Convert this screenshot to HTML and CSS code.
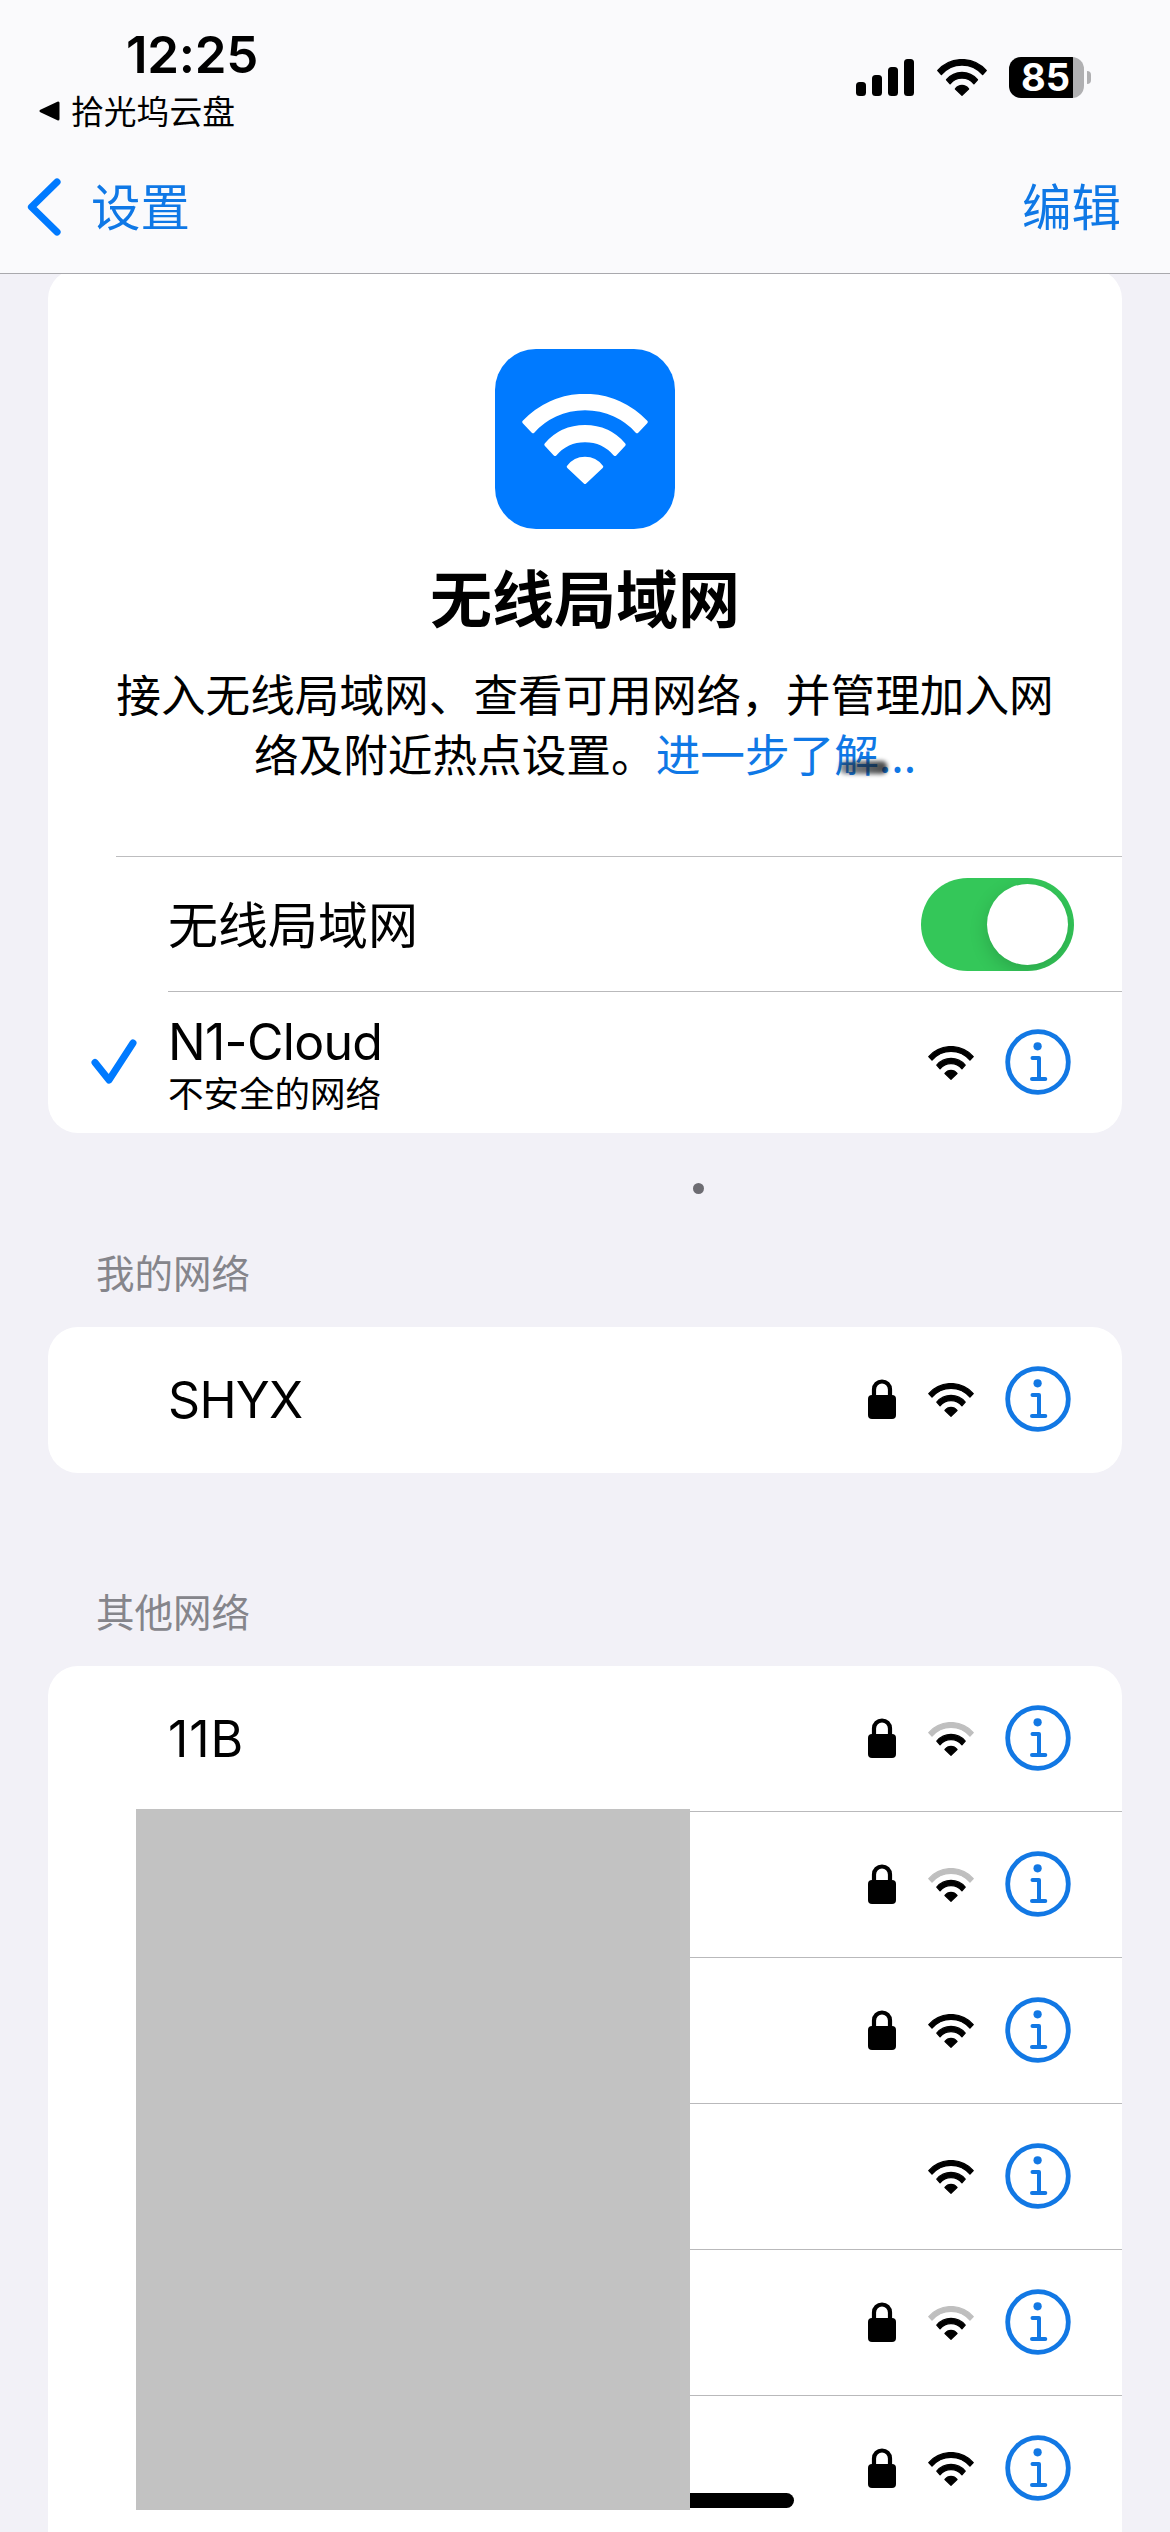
FILE: index.html
```html
<!DOCTYPE html>
<html lang="zh-CN">
<head>
<meta charset="utf-8">
<title>无线局域网</title>
<link rel="stylesheet" href="styles.css">
</head>
<body>
<svg class="sprite" aria-hidden="true">
  <symbol id="wifi" viewBox="0 0 126 90" preserveAspectRatio="none">
    <g fill="currentColor" stroke="currentColor" stroke-width="3.4" stroke-linejoin="round">
      <path class="wifi-outer" d="M2 28A83.5 83.5 0 0 1 124 28L115 37.5A70.3 70.3 0 0 0 11 37.5Z"/>
      <path d="M24 50.5A51.8 51.8 0 0 1 102 50.5L93 60.3A39.5 39.5 0 0 0 33 60.3Z"/>
      <path d="M46.5 72.8A20.5 20.5 0 0 1 79.5 72.8L63 88.2Z"/>
    </g>
  </symbol>
  <symbol id="lock" viewBox="0 0 28 40">
    <rect x="0" y="16" width="28" height="24" rx="4" fill="currentColor"/>
    <path d="M6 18V10.5a8 8 0 0 1 16 0V18" fill="none" stroke="currentColor" stroke-width="4.2"/>
  </symbol>
  <symbol id="info" viewBox="0 0 66 66">
    <circle cx="33" cy="33" r="30.3" fill="none" stroke="currentColor" stroke-width="4.8"/>
    <circle cx="32.6" cy="17.3" r="4.1" fill="currentColor"/>
    <path d="M27.5 29H34V50M27 50H40.3" fill="none" stroke="currentColor" stroke-width="4" stroke-linecap="round" stroke-linejoin="round"/>
  </symbol>
</svg>
<div class="screen">
  <header class="top">
    <div class="status">
      <div class="status-left">
        <div class="time">12:25</div>
        <div class="return">
          <svg class="return-arrow" viewBox="0 0 21 20"><path d="M2 10L19 2V18Z" fill="#000" stroke="#000" stroke-width="3" stroke-linejoin="round"/></svg>
          <span>拾光坞云盘</span>
        </div>
      </div>
      <div class="status-right">
        <div class="signal"><i class="bar bar1"></i><i class="bar bar2"></i><i class="bar bar3"></i><i class="bar bar4"></i></div>
        <svg class="status-wifi"><use href="#wifi"/></svg>
        <div class="battery"><div class="battery-body">85</div><div class="battery-cap"></div></div>
      </div>
    </div>
    <nav class="nav">
      <div class="back">
        <svg class="chevron" viewBox="0 0 34 58"><path d="M30 4L4.500 29L30 54" fill="none" stroke="#007aff" stroke-width="7.200" stroke-linecap="round" stroke-linejoin="round"/></svg>
        <span>设置</span>
      </div>
      <span class="edit">编辑</span>
    </nav>
  </header>

  <main class="content">
    <section class="card hero-card">
      <div class="hero">
        <div class="tile"><svg class="tile-wifi"><use href="#wifi"/></svg></div>
        <h1 class="title">无线局域网</h1>
        <p class="desc">接入无线局域网、查看可用网络，并管理加入网<br>络及附近热点设置。<a class="more">进一步了<span class="smudged">解</span>...</a></p>
      </div>
      <div class="switch-row">
        <span class="label">无线局域网</span>
        <div class="toggle"><div class="knob"></div></div>
      </div>
      <div class="row current">
        <svg class="check" viewBox="0 0 46 46"><path d="M4 23.500L18 41L42 4" fill="none" stroke="#007aff" stroke-width="7" stroke-linecap="round" stroke-linejoin="round"/></svg>
        <div class="names"><div class="ssid">N1-Cloud</div><div class="sub">不安全的网络</div></div>
        <div class="icons"><svg class="wifi"><use href="#wifi"/></svg><svg class="info"><use href="#info"/></svg></div>
      </div>
    </section>

    <div class="spinner-dot"></div>
    <h2 class="group">我的网络</h2>
    <section class="card">
      <div class="row single"><div class="ssid">SHYX</div><div class="icons"><svg class="lock"><use href="#lock"/></svg><svg class="wifi"><use href="#wifi"/></svg><svg class="info"><use href="#info"/></svg></div></div>
    </section>

    <h2 class="group other">其他网络</h2>
    <section class="card open">
      <div class="row"><div class="ssid numeric">11B</div><div class="icons"><svg class="lock"><use href="#lock"/></svg><svg class="wifi weak"><use href="#wifi"/></svg><svg class="info"><use href="#info"/></svg></div></div>
      <div class="row"><div class="icons"><svg class="lock"><use href="#lock"/></svg><svg class="wifi weak"><use href="#wifi"/></svg><svg class="info"><use href="#info"/></svg></div></div>
      <div class="row"><div class="icons"><svg class="lock"><use href="#lock"/></svg><svg class="wifi"><use href="#wifi"/></svg><svg class="info"><use href="#info"/></svg></div></div>
      <div class="row"><div class="icons"><svg class="wifi"><use href="#wifi"/></svg><svg class="info"><use href="#info"/></svg></div></div>
      <div class="row"><div class="icons"><svg class="lock"><use href="#lock"/></svg><svg class="wifi weak"><use href="#wifi"/></svg><svg class="info"><use href="#info"/></svg></div></div>
      <div class="row"><div class="icons"><svg class="lock"><use href="#lock"/></svg><svg class="wifi"><use href="#wifi"/></svg><svg class="info"><use href="#info"/></svg></div></div>
    </section>
  </main>
  <div class="home-indicator"></div>
  <div class="mask"></div>
</div>
</body>
</html>
```
FILE: styles.css
```css
* { box-sizing: border-box; }
html, body { margin: 0; padding: 0; }
body {
  font-family: "Noto Sans CJK SC", "Noto Sans", sans-serif;
  color: #000;
  background: #f2f1f7;
}
svg { display: block; flex: none; }
.sprite { position: absolute; width: 0; height: 0; }
.screen {
  position: relative;
  width: 1170px;
  height: 2532px;
  overflow: hidden;
  background: #f2f1f7;
}

/* status bar and navigation */
.top {
  position: relative;
  z-index: 2;
  height: 274px;
  background: #fafafc;
  border-bottom: 1px solid #a9a9ad;
}
.status { display: flex; justify-content: space-between; height: 142px; }
.status-left { padding-left: 39px; }
.time {
  margin: 25px 0 0 87px;
  height: 60px;
  line-height: 60px;
  font-family: Inter, sans-serif;
  font-weight: 600;
  font-size: 51px;
  letter-spacing: -.3px;
}
.return {
  display: flex;
  align-items: center;
  gap: 11px;
  margin-top: 6px;
  height: 40px;
  line-height: 40px;
  font-size: 32.8px;
}
.return span { position: relative; top: -1px; }
.return-arrow { width: 21px; height: 20px; }
.status-right { display: flex; align-items: center; height: 41px; margin: 57px 79px 0 0; }
.signal { display: flex; align-items: flex-end; gap: 6px; height: 37px; margin-right: 23px; }
.bar { width: 10px; border-radius: 3.5px; background: #000; }
.bar1 { height: 14px; }
.bar2 { height: 21px; }
.bar3 { height: 29px; }
.bar4 { height: 37px; }
.status-wifi { width: 50px; height: 37px; margin-right: 22px; }
.battery { display: flex; align-items: center; gap: 3px; }
.battery-body {
  width: 75px;
  height: 41px;
  padding-left: 12px;
  border-radius: 12px;
  background: linear-gradient(90deg, #000 64px, #b0b0b2 64px);
  color: #fff;
  font-family: Inter, sans-serif;
  font-weight: 700;
  font-size: 38px;
  line-height: 41px;
}
.battery-cap { width: 4px; height: 13px; border-radius: 0 4px 4px 0; background: #b0b0b2; }
.nav {
  display: flex;
  justify-content: space-between;
  align-items: center;
  height: 130px;
  padding: 0 49px 0 27px;
  color: #0f78e6;
  font-size: 49.5px;
  line-height: 60px;
}
.back { display: flex; align-items: center; gap: 30px; }
.chevron { width: 34px; height: 58px; }
.back span, .edit { position: relative; top: -2px; }

/* grouped cards */
.content { margin-top: -5px; padding: 0 48px; }
.card { border-radius: 30px; background: #fff; overflow: hidden; }
.hero {
  display: flex;
  flex-direction: column;
  align-items: center;
  height: 587px;
  padding-top: 80px;
}
.tile {
  display: flex;
  justify-content: center;
  width: 180px;
  height: 180px;
  padding-top: 45px;
  border-radius: 41px;
  background: #007aff;
  color: #fff;
}
.tile-wifi { width: 126px; height: 90px; }
.title { margin: 27px 0 0; font-size: 62px; line-height: 80px; font-weight: 700; }
.desc { margin: 27px 0 0; font-size: 44.65px; line-height: 60px; text-align: center; white-space: nowrap; }
.more { color: #0f78e6; }
.smudged { position: relative; }
.smudged::after {
  content: "";
  position: absolute;
  left: 6px;
  bottom: 11px;
  width: 47px;
  height: 13px;
  border-radius: 5px;
  background: linear-gradient(90deg, rgba(40, 50, 60, .55), rgba(25, 25, 25, .8));
  filter: blur(2px);
}
.switch-row {
  display: flex;
  justify-content: space-between;
  align-items: center;
  height: 135px;
  margin-left: 68px;
  padding: 0 48px 0 52px;
  border-top: 1px solid #bdbdbf;
}
.label { font-size: 50px; line-height: 60px; position: relative; top: -2px; }
.toggle {
  display: flex;
  align-items: center;
  justify-content: flex-end;
  width: 153px;
  height: 93px;
  padding-right: 6px;
  border-radius: 47px;
  background: #34c759;
  overflow: hidden;
}
.knob { width: 81px; height: 81px; border-radius: 50%; background: #fff; box-shadow: 0 6px 18px rgba(0, 0, 0, .17); }

.row {
  display: flex;
  align-items: center;
  height: 146px;
  margin-left: 120px;
  padding-right: 51px;
  border-bottom: 1px solid #b9b9bb;
}
.row:last-child { border-bottom: 0; }
.row.current {
  height: 142px;
  margin-left: 0;
  padding-left: 43px;
}
.row.current::before {
  content: "";
  position: absolute;
  left: 168px;
  right: 48px;
  top: 991px;
  height: 1px;
  background: #b9b9bb;
}
.check { width: 46px; height: 46px; margin-right: 31px; }
.names { margin-top: 3px; }
.ssid { font-family: Inter, sans-serif; font-size: 50px; line-height: 56px; letter-spacing: -.7px; }
.ssid.numeric { letter-spacing: .9px; }
.sub { font-size: 35.5px; line-height: 42px; margin-top: 1px; }
.icons { display: flex; align-items: center; margin: -2px 0 0 auto; }
.current .icons { margin-top: 0; }
.lock { width: 28px; height: 40px; margin-right: 32px; }
.wifi { width: 46px; height: 34px; margin: 2px 31px 0 0; }
.weak { --outer: #bfbfbf; }
.wifi-outer { fill: var(--outer, currentColor); stroke: var(--outer, currentColor); }
.info { width: 66px; height: 66px; color: #1278e4; }

.spinner-dot { width: 11px; height: 11px; margin: 50px 0 0 645px; border-radius: 50%; background: #6d6c72; }
.group { margin: 55px 0 0 48px; height: 78px; font-size: 38.5px; line-height: 44px; font-weight: 400; color: #85858b; }
.group.other { margin-top: 115px; height: 78px; }
.row.single { height: 146px; }
.open { border-radius: 30px 30px 0 0; }

/* overlays */
.home-indicator { position: absolute; left: 376px; top: 2493px; width: 418px; height: 15px; border-radius: 8px; background: #000; }
.mask { position: absolute; left: 136px; top: 1809px; width: 554px; height: 701px; background: #c2c2c2; }
```
